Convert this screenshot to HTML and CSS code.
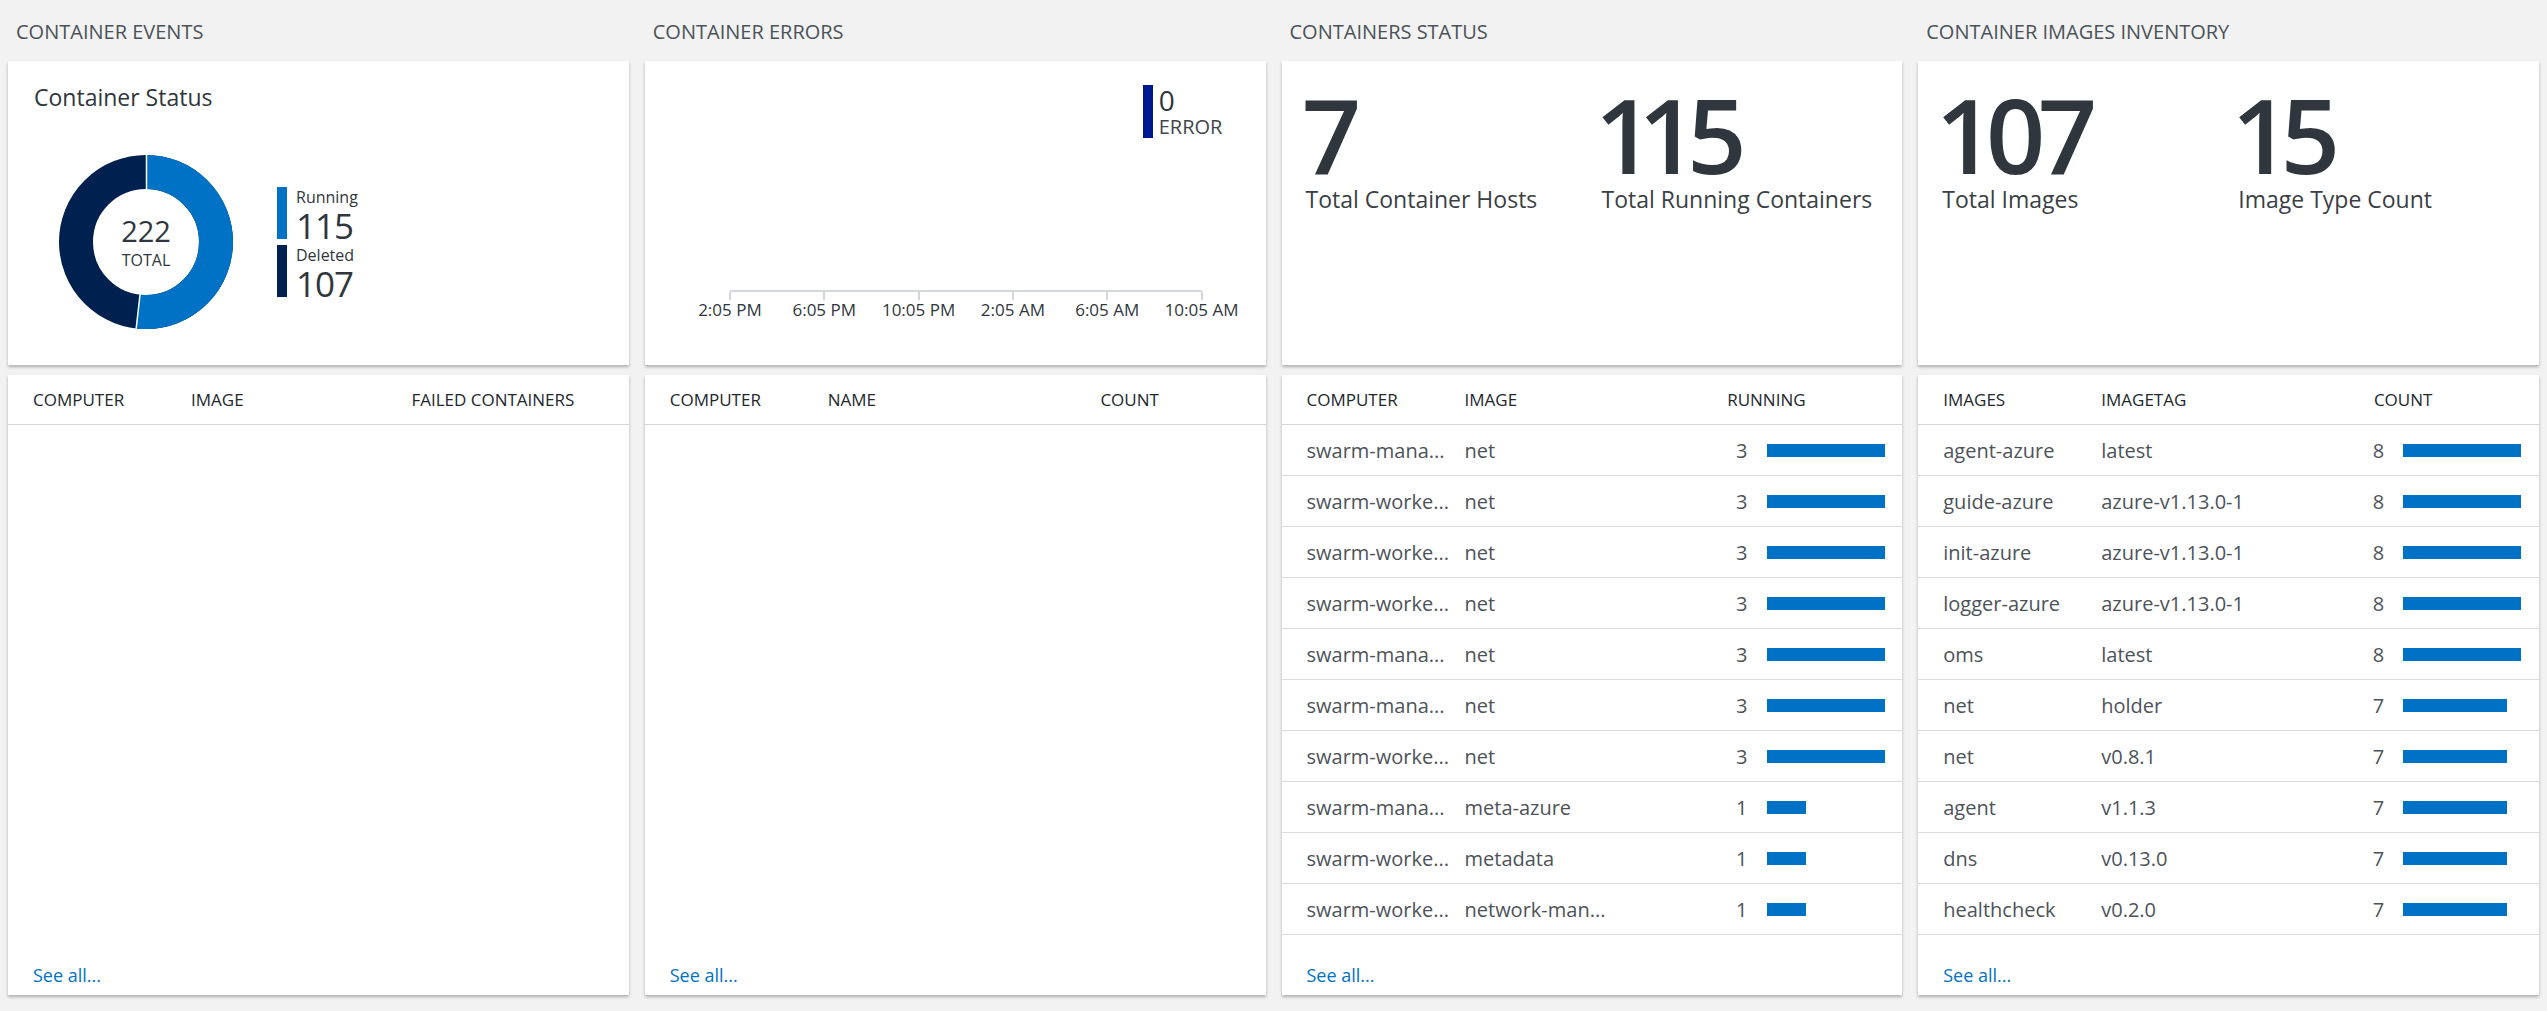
FILE: index.html
```html
<!DOCTYPE html>
<html lang="en">
<head>
<meta charset="utf-8">
<title>Containers</title>
<link rel="stylesheet" href="styles.css">
</head>
<body>
<div class="dashboard">

  <section class="column">
    <h2 class="col-title">CONTAINER EVENTS</h2>
    <div class="card card-top status-card">
      <div class="card-heading">Container Status</div>
      <div class="donut-row">
        <svg class="donut" width="176" height="176" viewBox="0 0 176 176">
          <circle cx="88" cy="88" r="70" fill="none" stroke="#002050" stroke-width="34"/>
          <circle cx="88" cy="88" r="70" fill="none" stroke="#0072c6" stroke-width="34" stroke-dasharray="227.8 600" transform="rotate(-90 88 88)"/>
          <line x1="88.5" y1="0" x2="88.5" y2="36" stroke="#fff" stroke-width="1.5"/>
          <line x1="82.2" y1="139" x2="78" y2="176" stroke="#fff" stroke-width="1.5"/>
          <text class="donut-num" x="88" y="88" text-anchor="middle">222</text>
          <text class="donut-label" x="88" y="112" text-anchor="middle">TOTAL</text>
        </svg>
        <div class="legend">
          <div class="legend-item">
            <span class="legend-bar bar-running"></span>
            <div class="legend-text">
              <div class="legend-label">Running</div>
              <div class="legend-value">115</div>
            </div>
          </div>
          <div class="legend-item">
            <span class="legend-bar bar-deleted"></span>
            <div class="legend-text">
              <div class="legend-label">Deleted</div>
              <div class="legend-value">107</div>
            </div>
          </div>
        </div>
      </div>
    </div>
    <div class="card card-table">
      <div class="table-head">
        <span>COMPUTER</span><span>IMAGE</span><span class="num-head">FAILED CONTAINERS</span>
      </div>
      <a class="see-all" href="#">See all...</a>
    </div>
  </section>

  <section class="column">
    <h2 class="col-title">CONTAINER ERRORS</h2>
    <div class="card card-top errors-card">
      <div class="err-legend">
        <span class="err-bar"></span>
        <div class="err-text">
          <div class="err-value">0</div>
          <div class="err-label">ERROR</div>
        </div>
      </div>
      <div class="axis">
        <div class="axis-line"></div>
        <div class="ticks">
          <div class="tick">2:05 PM</div>
          <div class="tick">6:05 PM</div>
          <div class="tick">10:05 PM</div>
          <div class="tick">2:05 AM</div>
          <div class="tick">6:05 AM</div>
          <div class="tick">10:05 AM</div>
        </div>
      </div>
    </div>
    <div class="card card-table">
      <div class="table-head">
        <span>COMPUTER</span><span>NAME</span><span class="num-head">COUNT</span>
      </div>
      <a class="see-all" href="#">See all...</a>
    </div>
  </section>

  <section class="column">
    <h2 class="col-title">CONTAINERS STATUS</h2>
    <div class="card card-top stats-card">
      <div class="stat">
        <div class="stat-num">7</div>
        <div class="stat-label">Total Container Hosts</div>
      </div>
      <div class="stat">
        <div class="stat-num">115</div>
        <div class="stat-label">Total Running Containers</div>
      </div>
    </div>
    <div class="card card-table">
      <div class="table-head">
        <span>COMPUTER</span><span>IMAGE</span><span class="num-head">RUNNING</span>
      </div>
      <div class="row"><span class="cell">swarm-mana...</span><span class="cell">net</span><span class="num-cell"><span class="num">3</span><span class="bar-track"><span class="bar" style="width:118px"></span></span></span></div>
      <div class="row"><span class="cell">swarm-worke...</span><span class="cell">net</span><span class="num-cell"><span class="num">3</span><span class="bar-track"><span class="bar" style="width:118px"></span></span></span></div>
      <div class="row"><span class="cell">swarm-worke...</span><span class="cell">net</span><span class="num-cell"><span class="num">3</span><span class="bar-track"><span class="bar" style="width:118px"></span></span></span></div>
      <div class="row"><span class="cell">swarm-worke...</span><span class="cell">net</span><span class="num-cell"><span class="num">3</span><span class="bar-track"><span class="bar" style="width:118px"></span></span></span></div>
      <div class="row"><span class="cell">swarm-mana...</span><span class="cell">net</span><span class="num-cell"><span class="num">3</span><span class="bar-track"><span class="bar" style="width:118px"></span></span></span></div>
      <div class="row"><span class="cell">swarm-mana...</span><span class="cell">net</span><span class="num-cell"><span class="num">3</span><span class="bar-track"><span class="bar" style="width:118px"></span></span></span></div>
      <div class="row"><span class="cell">swarm-worke...</span><span class="cell">net</span><span class="num-cell"><span class="num">3</span><span class="bar-track"><span class="bar" style="width:118px"></span></span></span></div>
      <div class="row"><span class="cell">swarm-mana...</span><span class="cell">meta-azure</span><span class="num-cell"><span class="num">1</span><span class="bar-track"><span class="bar" style="width:39px"></span></span></span></div>
      <div class="row"><span class="cell">swarm-worke...</span><span class="cell">metadata</span><span class="num-cell"><span class="num">1</span><span class="bar-track"><span class="bar" style="width:39px"></span></span></span></div>
      <div class="row"><span class="cell">swarm-worke...</span><span class="cell">network-man...</span><span class="num-cell"><span class="num">1</span><span class="bar-track"><span class="bar" style="width:39px"></span></span></span></div>
      <a class="see-all" href="#">See all...</a>
    </div>
  </section>

  <section class="column">
    <h2 class="col-title">CONTAINER IMAGES INVENTORY</h2>
    <div class="card card-top stats-card">
      <div class="stat">
        <div class="stat-num">107</div>
        <div class="stat-label">Total Images</div>
      </div>
      <div class="stat">
        <div class="stat-num">15</div>
        <div class="stat-label">Image Type Count</div>
      </div>
    </div>
    <div class="card card-table">
      <div class="table-head">
        <span>IMAGES</span><span>IMAGETAG</span><span class="num-head">COUNT</span>
      </div>
      <div class="row"><span class="cell">agent-azure</span><span class="cell">latest</span><span class="num-cell"><span class="num">8</span><span class="bar-track"><span class="bar" style="width:118px"></span></span></span></div>
      <div class="row"><span class="cell">guide-azure</span><span class="cell">azure-v1.13.0-1</span><span class="num-cell"><span class="num">8</span><span class="bar-track"><span class="bar" style="width:118px"></span></span></span></div>
      <div class="row"><span class="cell">init-azure</span><span class="cell">azure-v1.13.0-1</span><span class="num-cell"><span class="num">8</span><span class="bar-track"><span class="bar" style="width:118px"></span></span></span></div>
      <div class="row"><span class="cell">logger-azure</span><span class="cell">azure-v1.13.0-1</span><span class="num-cell"><span class="num">8</span><span class="bar-track"><span class="bar" style="width:118px"></span></span></span></div>
      <div class="row"><span class="cell">oms</span><span class="cell">latest</span><span class="num-cell"><span class="num">8</span><span class="bar-track"><span class="bar" style="width:118px"></span></span></span></div>
      <div class="row"><span class="cell">net</span><span class="cell">holder</span><span class="num-cell"><span class="num">7</span><span class="bar-track"><span class="bar" style="width:104px"></span></span></span></div>
      <div class="row"><span class="cell">net</span><span class="cell">v0.8.1</span><span class="num-cell"><span class="num">7</span><span class="bar-track"><span class="bar" style="width:104px"></span></span></span></div>
      <div class="row"><span class="cell">agent</span><span class="cell">v1.1.3</span><span class="num-cell"><span class="num">7</span><span class="bar-track"><span class="bar" style="width:104px"></span></span></span></div>
      <div class="row"><span class="cell">dns</span><span class="cell">v0.13.0</span><span class="num-cell"><span class="num">7</span><span class="bar-track"><span class="bar" style="width:104px"></span></span></span></div>
      <div class="row"><span class="cell">healthcheck</span><span class="cell">v0.2.0</span><span class="num-cell"><span class="num">7</span><span class="bar-track"><span class="bar" style="width:104px"></span></span></span></div>
      <a class="see-all" href="#">See all...</a>
    </div>
  </section>

</div>
</body>
</html>
```

FILE: styles.css
```css
* { box-sizing: border-box; }

html, body {
  margin: 0;
  padding: 0;
  background: #f2f2f2;
}

body {
  font-family: "Segoe UI", "Open Sans", "Noto Sans", sans-serif;
  color: #30363d;
  width: 2547px;
  height: 1011px;
  overflow: hidden;
}

.dashboard {
  display: grid;
  grid-template-columns: repeat(4, 1fr);
  column-gap: 16px;
  padding: 0 8px;
}

.column {
  display: flex;
  flex-direction: column;
  min-width: 0;
}

.col-title {
  margin: 0;
  height: 61px;
  padding: 20px 0 0 8px;
  font-size: 20px;
  line-height: 24px;
  font-weight: 400;
  color: #4b5259;
}

.card {
  background: #ffffff;
  box-shadow: 0 2px 3px rgba(0, 0, 0, 0.28);
}

.card-top {
  height: 304px;
}

/* ---------- status (donut) card ---------- */
.status-card {
  padding: 21px 26px 0;
}

.card-heading {
  font-size: 23px;
  line-height: 30px;
  color: #30363d;
}

.donut-row {
  display: flex;
  align-items: center;
  margin-top: 42px;
  margin-left: 24px;
  gap: 43px;
}

.donut {
  display: block;
  flex: none;
}

.donut-num {
  font-family: "Segoe UI", "Open Sans", sans-serif;
  font-size: 29px;
  fill: #30363d;
}

.donut-label {
  font-family: "Segoe UI", "Open Sans", sans-serif;
  font-size: 16px;
  fill: #30363d;
}

.legend {
  display: flex;
  flex-direction: column;
  gap: 6px;
}

.legend-item {
  display: flex;
  align-items: flex-start;
  gap: 9px;
}

.legend-bar {
  width: 10px;
  height: 52px;
  flex: none;
}

.bar-running { background: #0072c6; }
.bar-deleted { background: #002050; }

.legend-text {
  height: 52px;
}

.legend-label {
  font-size: 16px;
  line-height: 21px;
  height: 22px;
  overflow: hidden;
  color: #30363d;
}

.legend-value {
  margin-top: 2px;
  font-size: 35px;
  line-height: 30px;
  letter-spacing: -1px;
  color: #30363d;
}

/* ---------- errors card ---------- */
.errors-card {
  padding-top: 24px;
}

.err-legend {
  display: flex;
  gap: 6px;
  padding-left: 498px;
}

.err-bar {
  width: 10px;
  height: 53px;
  background: #00188f;
  flex: none;
}

.err-value {
  font-size: 28px;
  line-height: 30px;
  color: #30363d;
}

.err-label {
  font-size: 20px;
  line-height: 23px;
  color: #40464d;
}

.axis {
  margin-top: 152px;
  margin-left: 38px;
  width: 566px;
}

.axis-line {
  margin: 0 47px;
  height: 2px;
  background: #d3d7db;
}

.ticks {
  display: flex;
}

.tick {
  flex: 1;
  text-align: center;
  font-size: 17px;
  line-height: 20px;
  color: #30363d;
}

.tick::before {
  content: "";
  display: block;
  width: 2px;
  height: 8px;
  margin: 0 auto;
  background: #d3d7db;
}

/* ---------- stats cards ---------- */
.stats-card {
  display: grid;
  grid-template-columns: 296px 1fr;
  padding: 28px 24px 0;
  align-content: start;
}

.stat-num {
  font-size: 104px;
  line-height: 90px;
  font-weight: 600;
  letter-spacing: -6px;
  font-variant-numeric: proportional-nums;
  margin-left: -1px;
  color: #30363d;
}

.stat-label {
  margin-top: 5px;
  font-size: 23px;
  line-height: 30px;
  color: #3a3f45;
}

/* ---------- table cards ---------- */
.card-table {
  margin-top: 10px;
  height: 620px;
  display: flex;
  flex-direction: column;
}

.table-head,
.row {
  display: grid;
  grid-template-columns: 145px 168px 1fr;
  column-gap: 13px;
  align-items: center;
  padding: 0 15px 0 25px;
}

.table-head {
  height: 50px;
  border-bottom: 1px solid #d6d6d6;
  font-size: 17px;
  color: #22272c;
}

.num-head {
  text-align: center;
}

.row {
  height: 51px;
  border-bottom: 1px solid #dcdcdc;
  font-size: 20px;
  color: #4d5359;
}

.cell {
  white-space: nowrap;
  overflow: hidden;
  text-overflow: ellipsis;
}

.num-cell {
  display: flex;
  align-items: center;
  gap: 19px;
}

.num {
  width: 102px;
  text-align: right;
}

.bar-track {
  width: 118px;
  height: 13px;
  display: flex;
}

.bar {
  display: block;
  height: 13px;
  background: #0072c6;
}

.see-all {
  margin-top: auto;
  padding: 0 25px 8px;
  font-size: 18px;
  line-height: 24px;
  color: #0072c6;
  text-decoration: none;
}
```
